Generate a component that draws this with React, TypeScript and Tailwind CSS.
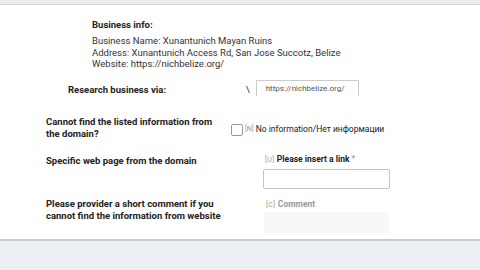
export default function App() {
  return (
    <div
      className="flex h-[270px] w-[480px] flex-col overflow-hidden bg-[#eceff1] text-[#222]"
      style={{ fontFamily: "Roboto, 'Liberation Sans', sans-serif" }}
    >
      <div className="h-[5px] shrink-0 border-b border-[#d4d7da] bg-[#e9ecee]" />
      <div className="h-[236px] shrink-0 border-b-2 border-[#c9cdd1] bg-white">
        <div className="pl-[92px] pt-[14px]">
          <div className="text-[9.5px] font-bold leading-[12px]">Business info:</div>
          <div className="mt-[4px] text-[9.5px] leading-[11.5px] text-[#333]">
            <div>Business Name: Xunantunich Mayan Ruins</div>
            <div>Address: Xunantunich Access Rd, San Jose Succotz, Belize</div>
            <div>Website: https://nichbelize.org/</div>
          </div>
        </div>

        <div className="mt-[10px] flex items-start">
          <div className="w-[246px] pl-[68px] pt-[4px] text-[9.5px] font-bold leading-[12px]">
            Research business via:
          </div>
          <div className="pt-[4px] text-[9px] leading-[12px]">\</div>
          <div className="ml-[6px] h-[16px] w-[103px] border border-b-0 border-[#ccc] pl-[9px] pt-[2px] text-[8px] leading-[12px] text-[#555]">
            https://nichbelize.org/
          </div>
        </div>

        <div className="mt-[20px] flex items-center">
          <div className="w-[231px] pl-[46px] text-[9.5px] font-bold leading-[12px]">
            Cannot find the listed information from
            <br />
            the domain?
          </div>
          <div className="flex items-center pt-[4px]">
            <div className="h-[12px] w-[12px] rounded-[2px] border border-[#999] bg-white" />
            <span className="ml-[2px] text-[7px] text-[#999]">[N]</span>
            <span className="ml-[2px] text-[8.5px] text-[#222]">No information/Нет информации</span>
          </div>
        </div>

        <div className="mt-[13px] flex items-start">
          <div className="w-[263px] pl-[46px] pt-[2px] text-[9.5px] font-bold leading-[12px]">
            Specific web page from the domain
          </div>
          <div>
            <div className="pl-[2px] text-[8.5px] leading-[12px]">
              <span className="text-[7px] tracking-[0.5px] text-[#999]">[U]</span>{" "}
              <span className="font-bold text-[#222]">Please insert a link</span>{" "}
              <span className="text-[#999]">*</span>
            </div>
            <div className="mt-[3px] h-[20px] w-[127px] rounded-[2px] border border-[#c4c4c4] bg-white" />
          </div>
        </div>

        <div className="mt-[9px] flex items-start">
          <div className="w-[264px] pl-[46px] text-[9.5px] font-bold leading-[12px]">
            Please provider a short comment if you
            <br />
            cannot find the information from website
          </div>
          <div>
            <div className="pl-[2px] text-[8.5px] font-bold leading-[12px] text-[#999]">
              <span className="text-[7px] font-normal tracking-[0.5px]">[C]</span> Comment
            </div>
            <div className="mt-[1px] h-[21px] w-[125px] rounded-[2px] bg-[#f7f8f9]" />
          </div>
        </div>
      </div>
    </div>
  );
}
